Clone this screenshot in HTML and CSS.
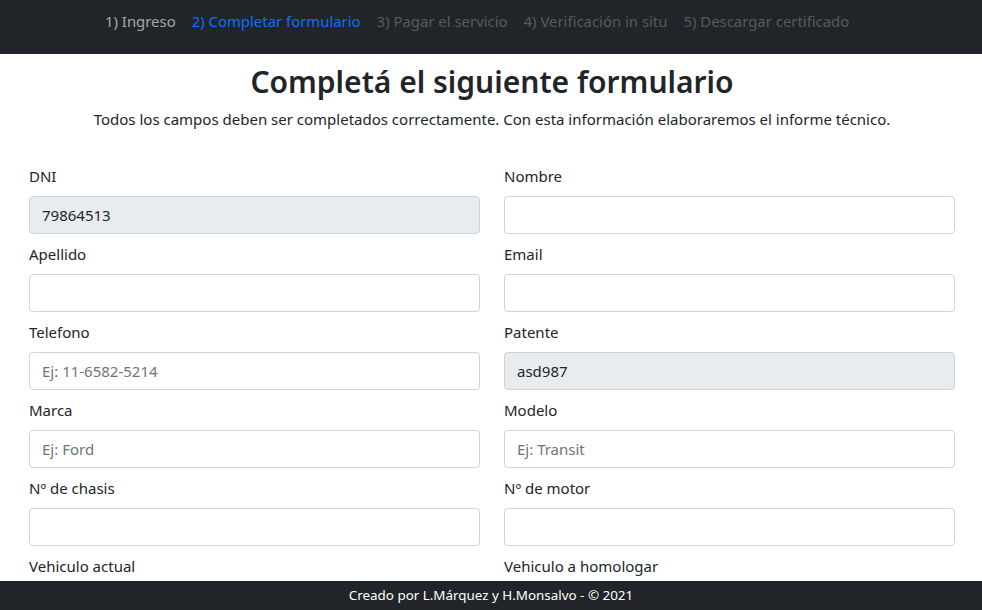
FILE: index.html
```html
<!DOCTYPE html>
<html lang="es">
<head>
<meta charset="utf-8">
<title>Formulario</title>
<link rel="stylesheet" href="styles.css">
</head>
<body>
<nav class="topnav">
  <ul class="steps">
    <li><a class="step done" href="#">1) Ingreso</a></li>
    <li><a class="step active" href="#">2) Completar formulario</a></li>
    <li><span class="step off">3) Pagar el servicio</span></li>
    <li><span class="step off">4) Verificación in situ</span></li>
    <li><span class="step off">5) Descargar certificado</span></li>
  </ul>
</nav>
<main class="page">
  <header class="intro">
    <h1 class="title">Completá el siguiente formulario</h1>
    <p class="lead">Todos los campos deben ser completados correctamente. Con esta información elaboraremos el informe técnico.</p>
  </header>
  <form class="grid">
    <div class="field"><label>DNI</label><input class="ctl" type="text" value="79864513" disabled></div>
    <div class="field"><label>Nombre</label><input class="ctl" type="text"></div>
    <div class="field"><label>Apellido</label><input class="ctl" type="text"></div>
    <div class="field"><label>Email</label><input class="ctl" type="text"></div>
    <div class="field"><label>Telefono</label><input class="ctl" type="text" placeholder="Ej: 11-6582-5214"></div>
    <div class="field"><label>Patente</label><input class="ctl" type="text" value="asd987" disabled></div>
    <div class="field"><label>Marca</label><input class="ctl" type="text" placeholder="Ej: Ford"></div>
    <div class="field"><label>Modelo</label><input class="ctl" type="text" placeholder="Ej: Transit"></div>
    <div class="field"><label>Nº de chasis</label><input class="ctl" type="text"></div>
    <div class="field"><label>Nº de motor</label><input class="ctl" type="text"></div>
    <div class="field"><label>Vehiculo actual</label><input class="ctl" type="text"></div>
    <div class="field"><label>Vehiculo a homologar</label><input class="ctl" type="text"></div>
  </form>
</main>
<footer class="foot">Creado por L.Márquez y H.Monsalvo - © 2021</footer>
</body>
</html>
```
FILE: styles.css
```css
* { box-sizing: border-box; }
html, body { margin: 0; padding: 0; }
body {
  font-family: "Segoe UI", "Noto Sans", "Open Sans", sans-serif;
  font-size: 15px;
  line-height: 24px;
  color: #212529;
  background: #fff;
  overflow: hidden;
}
.topnav {
  background: #212529;
  height: 54px;
  padding: 9px 0 0 97px;
}
.steps {
  list-style: none;
  margin: 0;
  padding: 0;
  display: flex;
}
.step {
  display: block;
  padding: 0 8px;
  font-size: 14.9px;
  line-height: 24px;
  text-decoration: none;
}
.step.done { color: rgba(255,255,255,.6); }
.step.active { color: #0d6efd; }
.step.off { color: rgba(255,255,255,.25); }
.page { padding: 0 27px 60px 29px; }
.intro { text-align: center; }
.title {
  margin: 0;
  padding-top: 6px;
  font-size: 30px;
  line-height: 44px;
  font-weight: 600;
}
.lead {
  margin: 0;
  padding-top: 3px;
  font-size: 15px;
  line-height: 24px;
}
.grid {
  margin-top: 33px;
  display: grid;
  grid-template-columns: 1fr 1fr;
  column-gap: 24px;
  row-gap: 8px;
}
.field { display: flex; flex-direction: column; }
.field label { line-height: 24px; margin-bottom: 8px; }
.ctl {
  height: 38px;
  padding: 6px 12px;
  font: inherit;
  color: #212529;
  background: #fff;
  border: 1px solid #ced4da;
  border-radius: 4px;
}
.ctl::placeholder { color: #6c757d; }
.ctl:disabled { background: #e9ecef; color: #212529; opacity: 1; }
.foot {
  position: fixed;
  left: 0; right: 0; bottom: 0;
  height: 29px;
  background: #212529;
  color: #fff;
  text-align: center;
  font-size: 13.4px;
  line-height: 29px;
}
```
